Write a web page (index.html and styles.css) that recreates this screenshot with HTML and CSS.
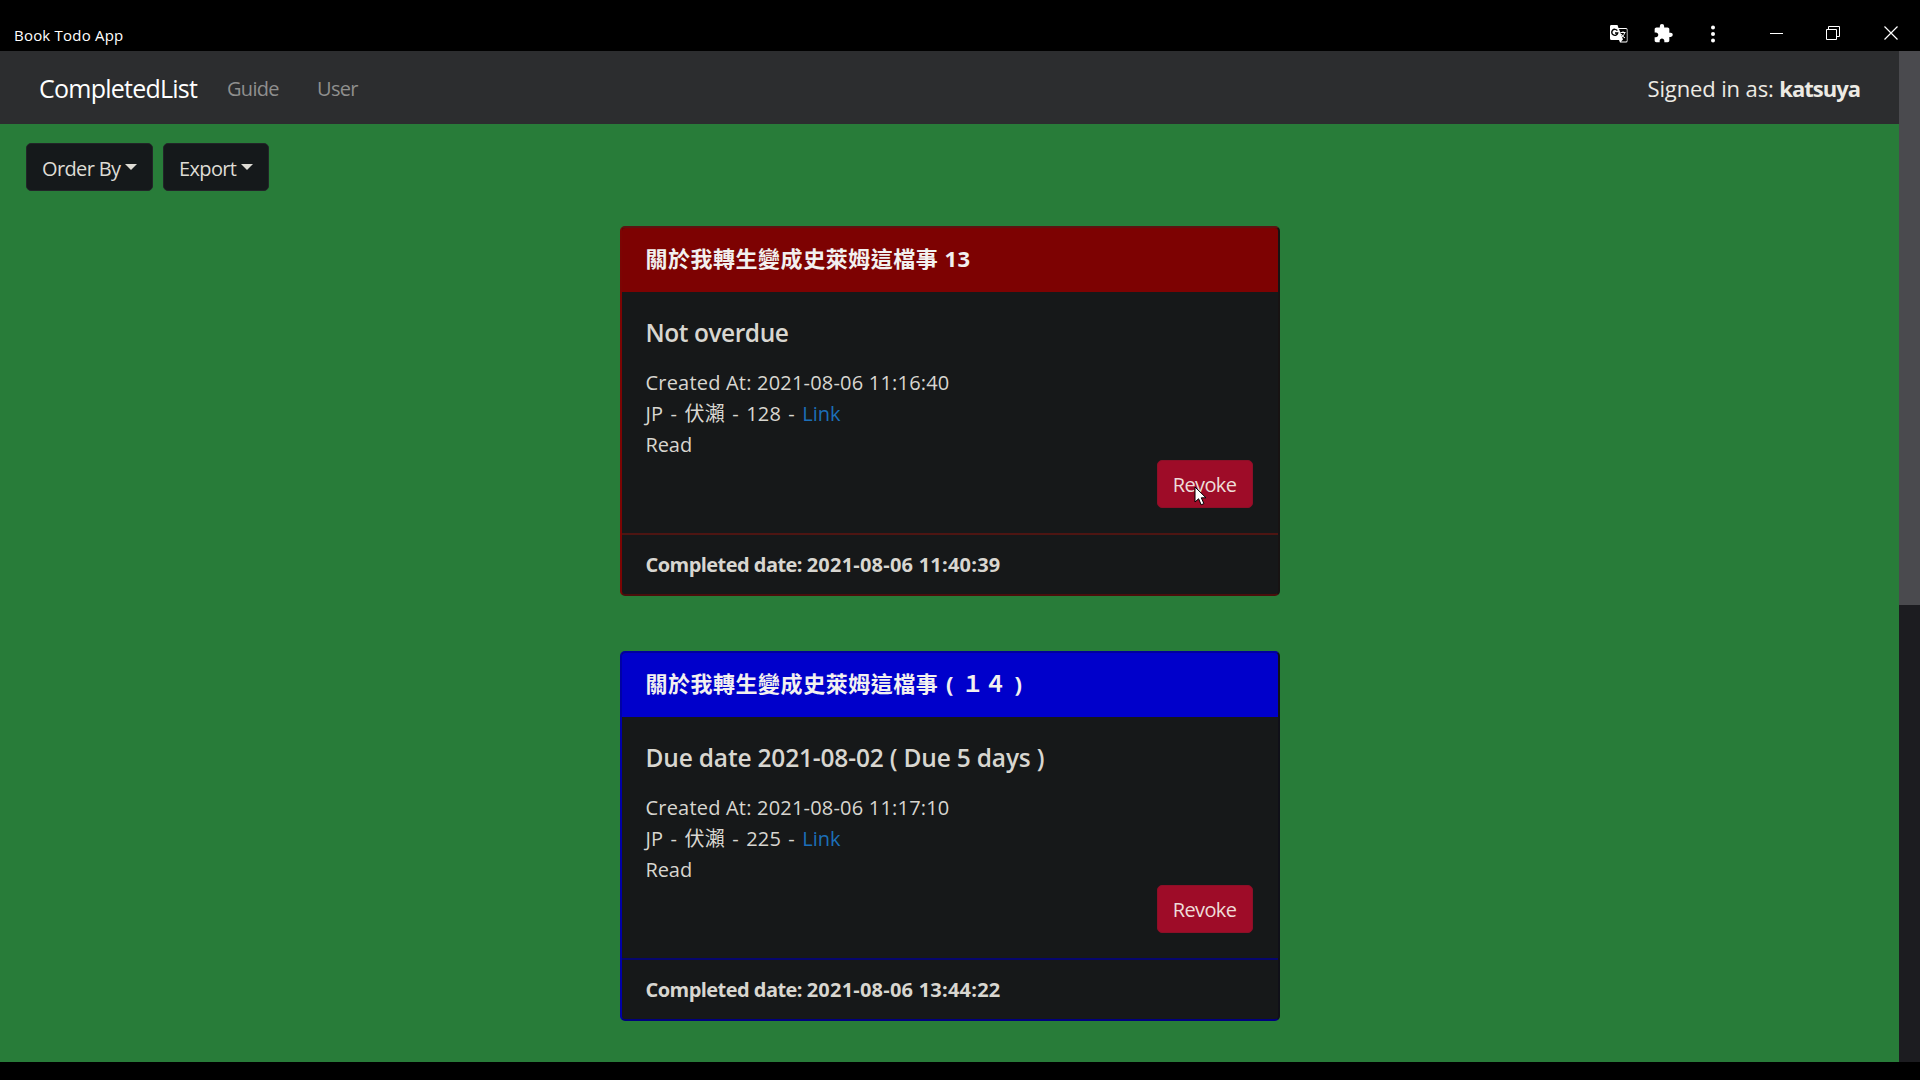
FILE: index.html
```
<!DOCTYPE html>
<html lang="zh-Hant">
<head>
<meta charset="utf-8">
<title>Book Todo App</title>
<link rel="stylesheet" href="styles.css">
</head>
<body>
<header class="titlebar">
  <span class="app-name">Book Todo App</span>
  <div class="window-tools">
    <svg class="ico-translate" width="20" height="20" viewBox="0 0 20 20">
      <path d="M2 1h6.500l1 3H17a1.500 1.500 0 0 1 1.500 1.500V17a1.500 1.500 0 0 1-1.500 1.500h-6L10 16H2.500A1.500 1.500 0 0 1 1 14.500V2.500A1.500 1.500 0 0 1 2 1z" fill="#fff"/>
      <path d="M10 5h7a.8.8 0 0 1 .8.8v11a.8.8 0 0 1-.8.8h-5l2-2z" fill="#000"/>
      <path d="M8.300 6.700A3 3 0 1 0 8.700 9H6" fill="none" stroke="#000" stroke-width="1.400"/>
      <path d="M11.500 8.500h5M14 7.300v1.200M15.700 8.500c-.5 2.500-2 4.200-3.800 5.300M12.300 10c.8 1.700 2 3 3.700 4" fill="none" stroke="#fff" stroke-width="1"/>
    </svg>
    <svg class="ico-puzzle" width="19" height="19" viewBox="1.500 1 21.500 22"><path fill="#fff" d="M20.500 11H19V7c0-1.100-.9-2-2-2h-4V3.500a2.500 2.500 0 0 0-5 0V5H4c-1.100 0-1.990.9-1.990 2v3.800H3.500c1.490 0 2.700 1.210 2.700 2.700s-1.210 2.700-2.700 2.700H2V20c0 1.100.9 2 2 2h3.800v-1.500c0-1.490 1.210-2.700 2.700-2.700s2.700 1.210 2.700 2.700V22H17c1.100 0 2-.9 2-2v-4h1.500a2.500 2.500 0 0 0 0-5z"/></svg>
    <svg class="ico-dots" width="6" height="18" viewBox="0 0 6 18" fill="#fff"><circle cx="3" cy="2.500" r="2"/><circle cx="3" cy="9" r="2"/><circle cx="3" cy="15.500" r="2"/></svg>
    <svg class="ico-min" width="13" height="14" viewBox="0 0 13 14"><path d="M0 7.500h13" stroke="#fff"/></svg>
    <svg class="ico-max" width="14" height="14" viewBox="0 0 14 14"><path d="M.5 3.500h10v10H.5zM2.500 3.500v-3h11v10h-3" fill="none" stroke="#fff"/></svg>
    <svg class="ico-close" width="14" height="14" viewBox="0 0 14 14"><path d="M.5.5l13 13M13.500.5l-13 13" stroke="#fff" stroke-width="1.200"/></svg>
  </div>
</header>
<div class="viewport">
  <main class="page">
    <nav class="navbar">
      <span class="brand">CompletedList</span>
      <span class="nav-link guide">Guide</span>
      <span class="nav-link user">User</span>
      <span class="signed">Signed in as: <b>katsuya</b></span>
    </nav>
    <div class="toolbar">
      <button class="btn dark order">Order By<i class="caret"></i></button>
      <button class="btn dark export">Export<i class="caret"></i></button>
    </div>
    <section class="cards">
      <article class="card red">
        <h2 class="card-header">關於我轉生變成史萊姆這檔事 13</h2>
        <div class="card-body">
          <h3 class="status overdue">Not overdue</h3>
          <p class="line">Created At: 2021-08-06 11:16:40</p>
          <p class="line book">JP - 伏瀨 - 128 - <a class="link">Link</a></p>
          <p class="line read">Read</p>
          <div class="actions"><button class="btn revoke">Revoke</button>
            <svg class="cursor" width="14" height="21" viewBox="0 0 14 21"><path d="M1 1v15l3.600-3.200 2.600 6 2.700-1.200-2.600-5.800H12z" fill="#fff" stroke="#000" stroke-width="1"/></svg>
          </div>
        </div>
        <div class="card-footer">Completed date: <time>2021-08-06 11:40:39</time></div>
      </article>
      <article class="card blue">
        <h2 class="card-header">關於我轉生變成史萊姆這檔事 ( １４ )</h2>
        <div class="card-body">
          <h3 class="status">Due date 2021-08-02 ( Due 5 days )</h3>
          <p class="line">Created At: 2021-08-06 11:17:10</p>
          <p class="line book">JP - 伏瀨 - 225 - <a class="link">Link</a></p>
          <p class="line read">Read</p>
          <div class="actions"><button class="btn revoke">Revoke</button></div>
        </div>
        <div class="card-footer">Completed date: <time>2021-08-06 13:44:22</time></div>
      </article>
    </section>
  </main>
  <div class="scrollbar"><div class="thumb"></div></div>
</div>
</body>
</html>
```
FILE: styles.css
```
* { box-sizing: border-box; margin: 0; padding: 0; }
body {
  width: 1920px; height: 1080px; overflow: hidden;
  background: #000; color: #d8d6d0;
  font: 20px/31px "Open Sans", "Noto Sans CJK TC", sans-serif;
  display: flex; flex-direction: column;
}
.titlebar { height: 51px; flex: none; display: flex; align-items: flex-start; justify-content: space-between; padding: 0 22px 0 14px; }
.app-name { font-size: 15px; line-height: 20px; letter-spacing: .21px; color: #fff; margin-top: 25px; }
.window-tools { display: flex; align-items: center; margin-top: 23px; height: 20px; }
.ico-translate { margin: 2px 25px 0 0; }
.ico-puzzle { margin: 1px 37px 0 0; }
.ico-dots { margin: 2px 54px 0 0; }
.ico-min { margin-right: 43px; }
.ico-max { margin-right: 44px; }
.viewport { height: 1011px; flex: none; display: flex; }
.page { flex: 1; background: #287c39; display: flex; flex-direction: column; }
.scrollbar { width: 21px; background: #1c1c20; }
.thumb { height: 554px; background: #4a4a4e; }

.navbar { height: 73px; background: #2c2d2f; display: flex; align-items: center; padding: 1px 39px 0 39px; }
.brand { width: 188px; font-size: 25px; letter-spacing: -.76px; color: #fff; }
.nav-link { font-size: 20px; letter-spacing: -.7px; color: #8f8f8e; padding-top: 1px; }
.guide { width: 90px; }
.signed { margin-left: auto; font-size: 22px; letter-spacing: -.12px; color: #eceae4; white-space: pre; }
.signed b { letter-spacing: -1px; }

.toolbar { display: flex; gap: 10px; padding: 19px 0 0 26px; }
.btn { height: 48px; border: 1px solid; border-radius: 5px; font: inherit; line-height: 46px; color: #dedcd5; display: flex; align-items: center; white-space: nowrap; }
.dark { background: #15191b; border-color: #222528; padding: 3px 15px 0; letter-spacing: -.63px; }
.order { width: 127px; }
.export { width: 106px; }
.caret { margin-left: 5px; margin-top: -4px; border: 6px solid transparent; border-top-color: #dedcd5; border-bottom: 0; }

.cards { display: flex; flex-direction: column; align-items: center; gap: 55px; padding-top: 35px; }
.card { width: 660px; height: 370px; border: 2px solid; border-radius: 5px; background: #161819; display: flex; flex-direction: column; overflow: hidden; }
.red { border-color: #5c1411 #171313 #4a0f0c #7b0504; --tone: #7d0202; --rule: #4d1512; }
.blue { border-color: #0000a0 #101018 #00007c #0000a6; --tone: #0000cb; --rule: #06066c; }
.card-header { height: 64px; padding-left: 24px; background: var(--tone); color: #f2f0ef; font-size: 22px; line-height: 60px; font-weight: 700; letter-spacing: .52px; white-space: pre; }
.blue .card-header { word-spacing: 1.500px; }
.card-body { flex: 1; padding: 23px 25px 0 24px; }
.status { font-size: 24.500px; line-height: 36px; font-weight: 600; letter-spacing: -.18px; margin-bottom: 16px; white-space: pre; }
.overdue { letter-spacing: -.45px; }
.line { height: 31px; letter-spacing: .2px; white-space: pre; }
.book { word-spacing: 1.900px; }
.link { color: #1c6fb8; letter-spacing: 0; }
.read { letter-spacing: -.1px; }
.actions { position: relative; display: flex; justify-content: flex-end; }
.revoke { width: 96px; background: #9e0c28; border-color: #8c0f27; color: #eeddd9; letter-spacing: -.64px; justify-content: center; padding-top: 1px; }
.cursor { position: absolute; right: 45px; top: 26px; }
.card-footer { height: 61px; border-top: 2px solid var(--rule); padding-left: 24px; line-height: 60px; font-weight: 700; letter-spacing: -.54px; white-space: pre; }
.card-footer time { letter-spacing: .22px; }
```
